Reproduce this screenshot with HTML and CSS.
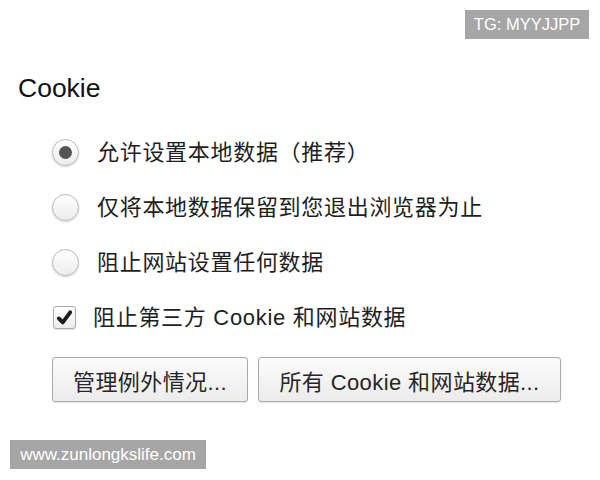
FILE: index.html
```html
<!DOCTYPE html>
<html lang="zh-CN">
<head>
<meta charset="utf-8">
<link rel="stylesheet" href="styles.css">
</head>
<body>
<div class="page">
  <h1 class="title">Cookie</h1>
  <div class="options">
    <div class="row">
      <span class="radio checked"></span>
      <span class="label">允许设置本地数据（推荐）</span>
    </div>
    <div class="row">
      <span class="radio"></span>
      <span class="label">仅将本地数据保留到您退出浏览器为止</span>
    </div>
    <div class="row">
      <span class="radio"></span>
      <span class="label">阻止网站设置任何数据</span>
    </div>
    <div class="row">
      <span class="checkbox"><svg viewBox="0 0 24 24" width="22" height="22"><path d="M5.5 12.5 L10 17 L18.5 5.5" fill="none" stroke="#1a1a1a" stroke-width="4.4" stroke-linecap="round" stroke-linejoin="round"/></svg></span>
      <span class="label cb-label">阻止第三方 Cookie 和网站数据</span>
    </div>
  </div>
  <div class="buttons">
    <button class="btn btn-a">管理例外情况...</button>
    <button class="btn btn-b">所有 Cookie 和网站数据...</button>
  </div>
</div>
<div class="tg">TG: MYYJJPP</div>
<div class="site">www.zunlongkslife.com</div>
</body>
</html>
```
FILE: styles.css
```css
html, body {
  margin: 0;
  padding: 0;
  background: #fff;
  width: 600px;
  height: 480px;
  overflow: hidden;
  font-family: "Liberation Sans", "Noto Sans CJK SC", sans-serif;
  color: #1a1a1a;
}

.page {
  padding: 73px 0 0 18px;
}

.title {
  margin: 0;
  font-size: 26.5px;
  line-height: 30px;
  font-weight: normal;
  color: #111;
}

.options {
  margin-top: 22px;
  padding-left: 34px;
  display: flex;
  flex-direction: column;
}

.row {
  height: 55px;
  display: flex;
  align-items: center;
}

.radio {
  flex: none;
  box-sizing: border-box;
  width: 27px;
  height: 27px;
  border-radius: 50%;
  border: 1px solid #b9b9b9;
  background: linear-gradient(#ffffff, #ececec);
  box-shadow: 0 1px 2px rgba(0,0,0,0.18);
  display: flex;
  align-items: center;
  justify-content: center;
}

.radio.checked::after {
  content: "";
  width: 13px;
  height: 13px;
  border-radius: 50%;
  background: #555;
}

.label {
  margin-left: 18px;
  font-size: 22px;
  line-height: 28px;
  letter-spacing: 0.7px;
  color: #1e1e1e;
}

.checkbox {
  flex: none;
  box-sizing: border-box;
  width: 23px;
  height: 23px;
  margin-left: 1px;
  border: 1px solid #ababab;
  border-radius: 3px;
  background: linear-gradient(#ffffff, #ececec);
  box-shadow: 0 1px 1px rgba(0,0,0,0.12);
  display: flex;
  align-items: center;
  justify-content: center;
}

.checkbox svg {
  display: block;
}

.cb-label {
  margin-left: 17px;
}

.buttons {
  margin-top: 12px;
  padding-left: 34px;
  display: flex;
  gap: 10px;
}

.btn {
  box-sizing: border-box;
  height: 45px;
  padding: 0;
  border: 1px solid #a9a9a9;
  border-radius: 3px;
  background: linear-gradient(#fbfbfb, #ececec);
  box-shadow: 0 1px 1px rgba(0,0,0,0.1);
  font-family: "Liberation Sans", "Noto Sans CJK SC", sans-serif;
  font-size: 22px;
  letter-spacing: 0.4px;
  color: #262626;
  text-align: center;
}

.btn-a {
  width: 196px;
}

.btn-b {
  width: 303px;
}

.tg {
  position: absolute;
  top: 10px;
  left: 465px;
  width: 124px;
  height: 29px;
  background: #a6a6a6;
  color: #fff;
  font-size: 16.5px;
  line-height: 29px;
  text-align: center;
}

.site {
  position: absolute;
  top: 440px;
  left: 10px;
  width: 196px;
  height: 29px;
  background: #a6a6a6;
  color: #fff;
  font-size: 17px;
  line-height: 29px;
  text-align: center;
}
```
